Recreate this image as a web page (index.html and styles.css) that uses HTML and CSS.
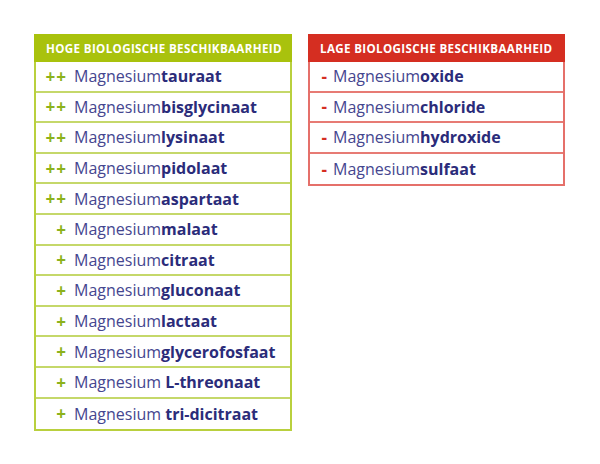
FILE: index.html
```html
<!DOCTYPE html>
<html lang="nl">
<head>
<meta charset="utf-8">
<title>Biologische beschikbaarheid magnesium</title>
<link rel="stylesheet" href="styles.css">
</head>
<body>
<div class="page">
  <div class="table table-high">
    <div class="head">HOGE BIOLOGISCHE BESCHIKBAARHEID</div>
    <div class="row"><span class="mark">++</span><span class="name">Magnesium<b>tauraat</b></span></div>
    <div class="row"><span class="mark">++</span><span class="name">Magnesium<b>bisglycinaat</b></span></div>
    <div class="row"><span class="mark">++</span><span class="name">Magnesium<b>lysinaat</b></span></div>
    <div class="row"><span class="mark">++</span><span class="name">Magnesium<b>pidolaat</b></span></div>
    <div class="row"><span class="mark">++</span><span class="name">Magnesium<b>aspartaat</b></span></div>
    <div class="row"><span class="mark">+</span><span class="name">Magnesium<b>malaat</b></span></div>
    <div class="row"><span class="mark">+</span><span class="name">Magnesium<b>citraat</b></span></div>
    <div class="row"><span class="mark">+</span><span class="name">Magnesium<b>gluconaat</b></span></div>
    <div class="row"><span class="mark">+</span><span class="name">Magnesium<b>lactaat</b></span></div>
    <div class="row"><span class="mark">+</span><span class="name">Magnesium<b>glycerofosfaat</b></span></div>
    <div class="row"><span class="mark">+</span><span class="name">Magnesium <b>L-threonaat</b></span></div>
    <div class="row"><span class="mark">+</span><span class="name">Magnesium <b>tri-dicitraat</b></span></div>
  </div>
  <div class="table table-low">
    <div class="head">LAGE BIOLOGISCHE BESCHIKBAARHEID</div>
    <div class="row"><span class="mark">-</span><span class="name">Magnesium<b>oxide</b></span></div>
    <div class="row"><span class="mark">-</span><span class="name">Magnesium<b>chloride</b></span></div>
    <div class="row"><span class="mark">-</span><span class="name">Magnesium<b>hydroxide</b></span></div>
    <div class="row"><span class="mark">-</span><span class="name">Magnesium<b>sulfaat</b></span></div>
  </div>
</div>
</body>
</html>
```
FILE: styles.css
```css
* { box-sizing: border-box; }
html, body { margin: 0; padding: 0; background: #ffffff; }
body { font-family: "Open Sans", "DejaVu Sans", sans-serif; }
.page {
  display: flex;
  align-items: flex-start;
  gap: 16px;
  padding: 34px 0 0 34px;
}
.table {
  border: 2px solid #b9d03e;
  display: flex;
  flex-direction: column;
}
.table-high { width: 258px; }
.table-low { width: 257px; border-color: #e5706a; }
.head {
  height: 28px;
  margin: -2px -2px 0;
  padding: 1px 12px 0;
  display: flex;
  align-items: center;
  background: #a9c20d;
  color: #ffffff;
  font-size: 11.6px;
  font-weight: 700;
  letter-spacing: 0.35px;
  white-space: nowrap;
}
.table-low .head { background: #d52e21; }
.row {
  height: 30.6px;
  display: flex;
  align-items: center;
  border-bottom: 2px solid #c5d86a;
  color: #45468f;
  font-size: 16px;
  white-space: nowrap;
}
.row:last-child { border-bottom: none; }
.table-low .row { border-bottom-color: #e77b74; }
.mark {
  width: 38px;
  text-align: right;
  padding-right: 7px;
  color: #8cb21c;
  font-size: 17px;
  font-weight: 700;
  letter-spacing: 1px;
  flex: none;
}
.table-low .mark { width: 23px; padding-right: 6px; color: #d52e21; letter-spacing: 0; }
.name b { color: #2b2c7a; font-weight: 700; }
```
